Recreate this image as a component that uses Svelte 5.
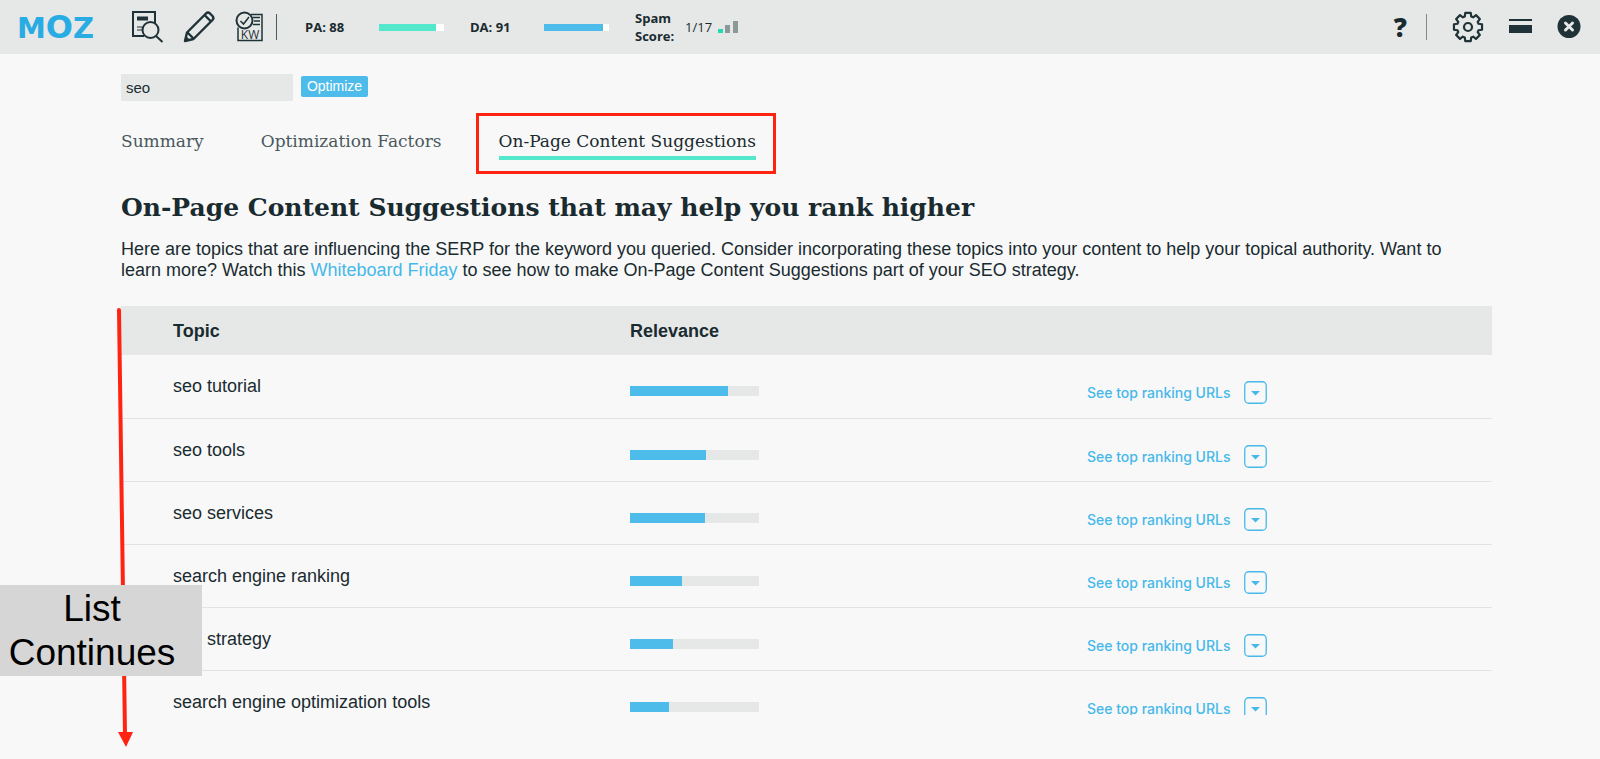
<script>
	let keyword = 'seo';
	let active = 'On-Page Content Suggestions';

	const tabs = ['Summary', 'Optimization Factors', 'On-Page Content Suggestions'];

	const topics = [
		{ name: 'seo tutorial', relevance: 76 },
		{ name: 'seo tools', relevance: 59 },
		{ name: 'seo services', relevance: 58 },
		{ name: 'search engine ranking', relevance: 40 },
		{ name: 'seo strategy', relevance: 33 },
		{ name: 'search engine optimization tools', relevance: 30 }
	];

	// settings gear: eight teeth, four corners each
	const corners = [[-17, 11], [-11, 14.3], [11, 14.3], [17, 11]];
	const gear = [];
	for (let tooth = 0; tooth < 8; tooth++) {
		for (const [offset, radius] of corners) {
			const angle = ((tooth * 45 + offset) * Math.PI) / 180;
			gear.push(`${16 + radius * Math.sin(angle)},${16 - radius * Math.cos(angle)}`);
		}
	}
</script>

<div class="app">
	<header>
		<a class="logo" href="#moz">M<span>O</span>Z</a>
		<nav class="tools">
			<button aria-label="Page analysis">
				<svg width="34" height="34" viewBox="0 0 34 34" fill="none" stroke="#1f3237" stroke-width="2">
					<path d="M14 26H3V2h22v11" />
					<path d="M7 8.500h11" stroke-width="4" />
					<path d="M7 17h5M7 20h5" stroke-width="1" />
					<circle cx="20.500" cy="20" r="8" />
					<path d="M26 26l6.500 6" />
				</svg>
			</button>
			<button aria-label="Highlight">
				<svg width="34" height="34" viewBox="0 0 34 34" fill="none" stroke="#1f3237" stroke-width="2.400" stroke-linejoin="round">
					<path d="M3 31l2-8.500L24 3.500a3 3 0 0 1 4 0l2.500 2.500a3 3 0 0 1 0 4L11.500 29z" />
					<path d="M5.500 22.500l6 6M22.500 5l6.500 6.500" />
					<path d="M3 31l1-4.500 3.500 3.500z" fill="#1f3237" stroke-width="1" />
				</svg>
			</button>
			<button aria-label="Keyword optimization">
				<svg width="30" height="34" viewBox="0 0 30 34" fill="none" stroke="#1f3237" stroke-width="1.500">
					<path d="M17 4.500h11v26H4V17.500" />
					<path d="M19 7.500h7M20 11h6M19 14.500h7" />
					<circle cx="10.500" cy="10.500" r="8" stroke-width="2" />
					<path d="M6.500 11l3 3 5.500-7" />
					<text x="16" y="29" text-anchor="middle" fill="#1f3237" stroke="none">KW</text>
				</svg>
			</button>
		</nav>
		<div class="metrics">
			<strong class="metric">PA: 88</strong>
			<div class="meter"><div class="green" style="width: 88%"></div></div>
			<strong class="metric">DA: 91</strong>
			<div class="meter"><div class="blue" style="width: 91%"></div></div>
			<strong class="spam">Spam Score:</strong>
			<span class="score">1/17</span>
			<svg width="22" height="14" viewBox="0 0 22 14">
				<path d="M1 9h5v4H1z" fill="#1fdcb0" />
				<path d="M8 5h5v8H8zM16 1h5v12h-5z" fill="#8d9899" />
			</svg>
		</div>
		<div class="actions">
			<button class="help" aria-label="Help">?</button>
			<button aria-label="Settings">
				<svg width="32" height="32" viewBox="0 0 32 32" fill="none" stroke="#1f3237" stroke-width="2.200" stroke-linejoin="round">
					<polygon points={gear.join(' ')} />
					<circle cx="16" cy="16" r="4" />
				</svg>
			</button>
			<button aria-label="Minimize">
				<svg width="23" height="16" viewBox="0 0 23 16" fill="#1f3237">
					<path d="M0 0h23v2H0zM0 6h23v8H0z" />
				</svg>
			</button>
			<button aria-label="Close">
				<svg width="24" height="24" viewBox="0 0 24 24">
					<circle cx="12" cy="11.500" r="11.500" fill="#1f3237" />
					<path d="M8.500 8l7 7M15.500 8l-7 7" stroke="#e6e8e7" stroke-width="3" stroke-linecap="round" />
				</svg>
			</button>
		</div>
	</header>

	<main>
		<form on:submit|preventDefault>
			<input type="text" aria-label="Keyword" bind:value={keyword} />
			<button type="submit">Optimize</button>
		</form>

		<nav class="tabs">
			{#each tabs as tab}
				<a href="#{tab}" class:active={tab === active} on:click={() => (active = tab)}>{tab}</a>
			{/each}
		</nav>

		<h1>On-Page Content Suggestions that may help you rank higher</h1>
		<p>
			Here are topics that are influencing the SERP for the keyword you queried. Consider incorporating
			these topics into your content to help your topical authority. Want to learn more? Watch this
			<a href="#whiteboard-friday">Whiteboard Friday</a> to see how to make On-Page Content Suggestions
			part of your SEO strategy.
		</p>

		<div class="list">
			<table>
				<thead>
					<tr>
						<th>Topic</th>
						<th>Relevance</th>
						<th></th>
					</tr>
				</thead>
				<tbody>
					{#each topics as topic}
						<tr>
							<td>{topic.name}</td>
							<td class="relevance">
								<div class="track">
									<div class="blue" style="width: {topic.relevance}%"></div>
								</div>
							</td>
							<td class="urls">
								<button>
									See top ranking URLs
									<svg width="23" height="23" viewBox="0 0 23 23">
										<rect x=".75" y=".75" width="21.500" height="21.500" rx="4" fill="none" stroke="#46b9ea" stroke-width="1.300" />
										<path d="M7 10h9l-4.500 4.500z" fill="#46b9ea" />
									</svg>
								</button>
							</td>
						</tr>
					{/each}
				</tbody>
			</table>
		</div>
	</main>

	<svg class="arrow" width="20" height="440" viewBox="0 0 20 440">
		<path d="M4 2l6 425" stroke="#ff2412" stroke-width="4" stroke-linecap="round" />
		<path d="M3 424h15l-7 15z" fill="#ff2412" />
	</svg>
	<div class="note">List Continues</div>
</div>

<style>
	:global(body) {
		background: #f8f8f8;
	}
	.app {
		position: relative;
		display: flex;
		flex-direction: column;
		height: 100vh;
		overflow: hidden;
		color: #1a2b30;
		font-family: 'Liberation Sans', Arial, sans-serif;
		font-size: 18px;
		line-height: 21px;
	}
	button {
		border: 0;
		padding: 0;
		background: none;
		font: inherit;
		color: inherit;
		cursor: pointer;
	}
	svg {
		display: block;
	}
	a {
		color: #46b9ea;
		text-decoration: none;
	}
	header {
		display: flex;
		align-items: center;
		flex-shrink: 0;
		height: 54px;
		padding: 0 19px 0 17px;
		background: #e6e8e7;
	}
	.logo {
		width: 113px;
		font-family: 'DejaVu Sans', sans-serif;
		font-size: 29px;
		font-weight: bold;
		line-height: 32px;
		color: #29ace3;
	}
	.logo span {
		font-size: 32px;
	}
	.tools {
		display: flex;
		align-items: center;
		gap: 18px;
		height: 26px;
		padding-right: 12px;
		border-right: 1px solid #4d5c60;
	}
	.tools text {
		font-family: 'Open Sans', sans-serif;
		font-size: 12px;
	}
	.metrics {
		display: flex;
		align-items: center;
		margin-left: 28px;
		font-family: 'Open Sans', sans-serif;
		font-size: 13px;
		line-height: 18px;
	}
	.metric {
		width: 74px;
	}
	.meter {
		width: 65px;
		height: 7px;
		margin-right: 26px;
		background: #fff;
	}
	.meter div,
	.track div {
		height: 100%;
	}
	.green {
		background: #53e7cb;
	}
	.blue {
		background: #4dbceb;
	}
	.spam {
		width: 50px;
	}
	.score {
		width: 32px;
	}
	.actions {
		display: flex;
		align-items: center;
		gap: 25px;
		margin-left: auto;
	}
	.help {
		height: 26px;
		padding-right: 19px;
		border-right: 1px solid #7d898b;
		font-family: 'Open Sans', sans-serif;
		font-size: 26px;
		font-weight: 800;
	}
	main {
		display: flex;
		flex-direction: column;
		flex: 1;
		min-height: 0;
		padding: 20px 108px 44px 121px;
	}
	form {
		display: flex;
		gap: 8px;
	}
	form input {
		box-sizing: border-box;
		width: 172px;
		height: 27px;
		padding: 0 5px;
		border: 0;
		background: #e6e8e7;
		color: inherit;
		font-family: inherit;
		font-size: 15px;
	}
	form button {
		width: 67px;
		height: 21px;
		margin-top: 2px;
		border-radius: 2px;
		background: #4dbceb;
		color: #fff;
		font-size: 14px;
	}
	.tabs {
		display: flex;
		gap: 57px;
		margin-top: 29px;
		font-family: 'DejaVu Serif', serif;
		font-size: 17px;
		line-height: 22px;
	}
	.tabs a {
		position: relative;
		padding-bottom: 4px;
		border-bottom: 4px solid transparent;
		color: #4a595d;
	}
	.tabs .active {
		border-color: #53e7cb;
		color: #1a2b30;
	}
	/* highlight box around the open tab */
	.tabs .active::after {
		content: '';
		position: absolute;
		inset: -17px -20px -18px -23px;
		border: 3px solid #ff2412;
	}
	h1 {
		margin: 30px 0 13px;
		font-family: 'DejaVu Serif', serif;
		font-size: 25px;
		line-height: 36px;
	}
	p {
		margin: 0 0 25px;
		padding-right: 20px;
	}
	.list {
		flex: 1;
		min-height: 0;
		overflow: hidden;
	}
	table {
		width: 100%;
		table-layout: fixed;
		border-collapse: collapse;
	}
	th {
		box-sizing: border-box;
		height: 49px;
		padding: 2px 0 0 52px;
		background: #e6e8e7;
		text-align: left;
	}
	td {
		box-sizing: border-box;
		height: 63px;
		padding: 21px 0 0 52px;
		border-bottom: 1px solid #e2e4e4;
		vertical-align: top;
	}
	.relevance {
		padding-top: 31px;
	}
	.track {
		width: 129px;
		height: 10px;
		background: #e6e8e7;
	}
	.urls {
		padding-top: 26px;
	}
	.urls button {
		display: flex;
		align-items: center;
		gap: 13px;
		color: #46b9ea;
		font-family: Inter, sans-serif;
		font-size: 14px;
		font-weight: 500;
	}
	.arrow {
		position: absolute;
		top: 308px;
		left: 115px;
	}
	.note {
		position: absolute;
		top: 585px;
		left: 0;
		box-sizing: border-box;
		width: 202px;
		padding: 2px 18px 1px 0;
		background: #d6d6d6;
		color: #000;
		font-size: 37px;
		line-height: 44px;
		text-align: center;
	}
</style>
